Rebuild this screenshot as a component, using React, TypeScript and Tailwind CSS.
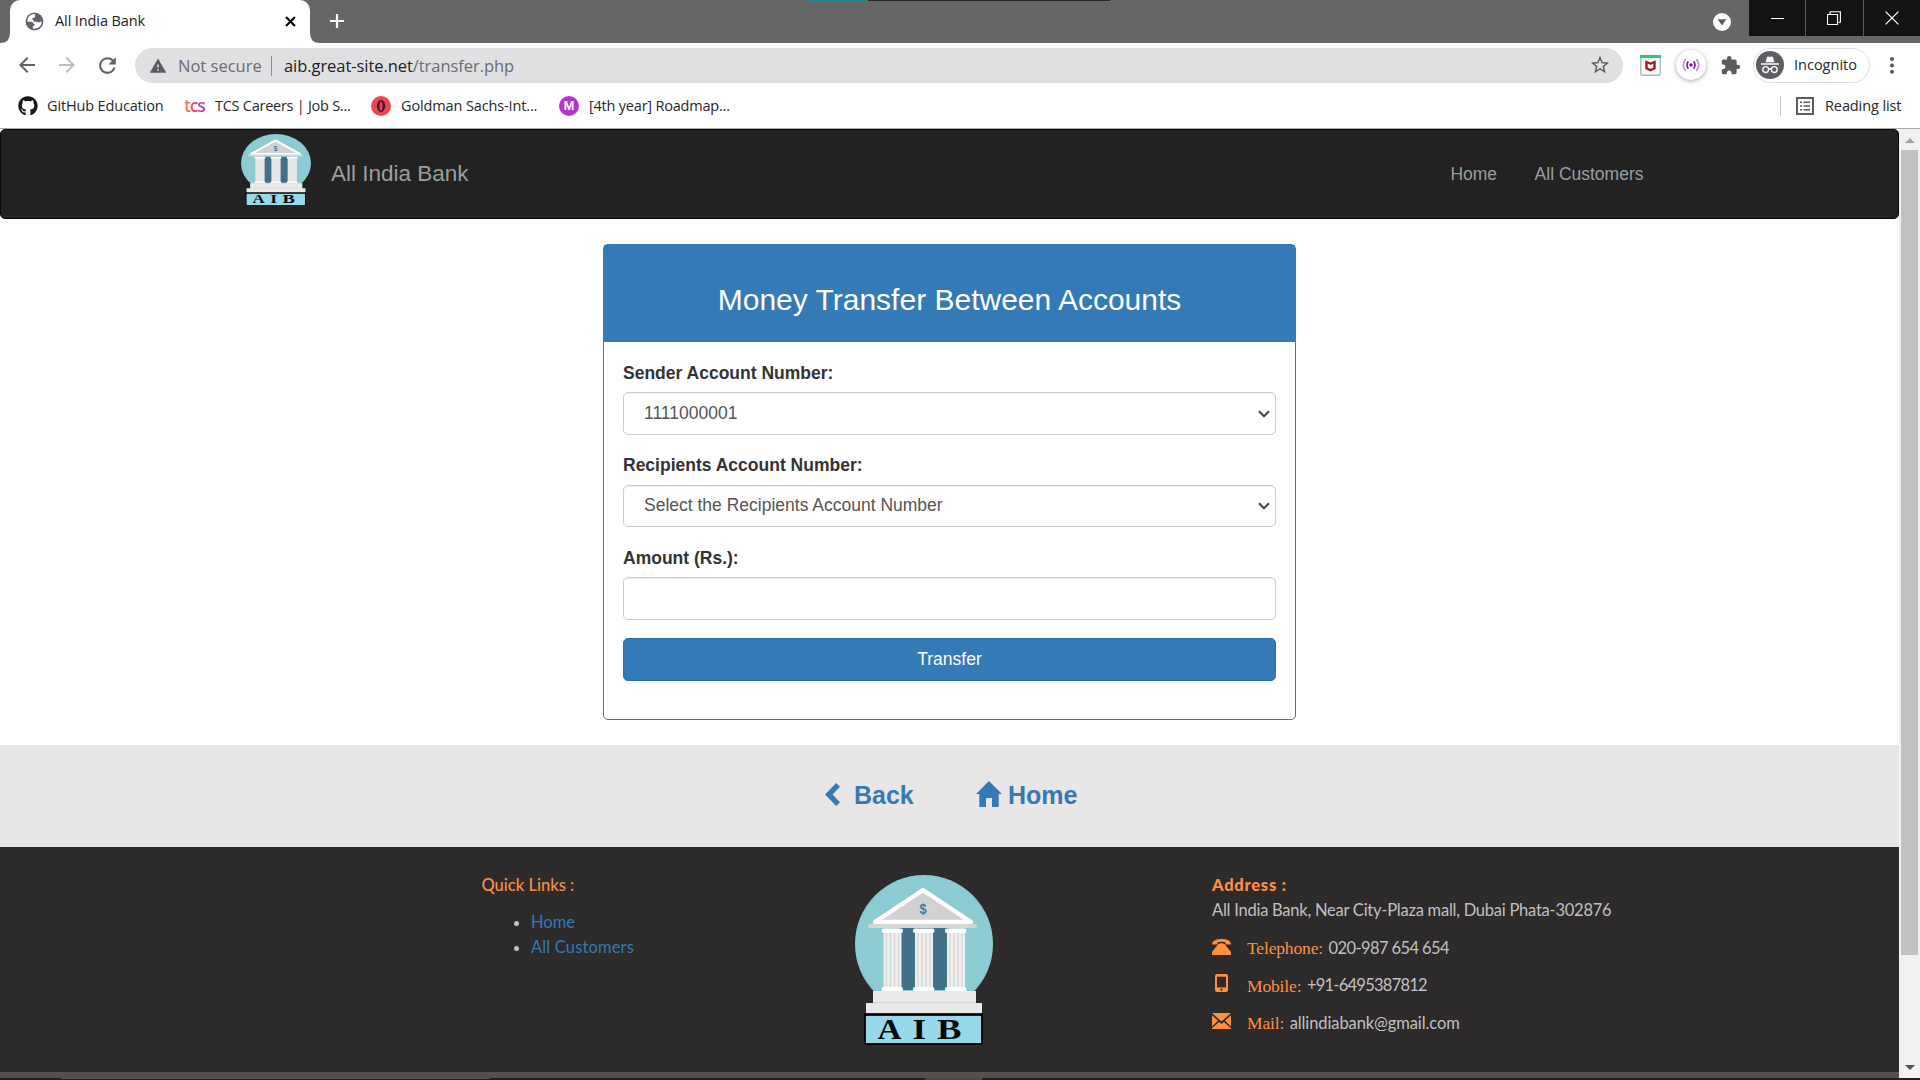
import type { ReactNode } from 'react';
import { FaGithub } from 'react-icons/fa';
import { MdArrowBack, MdArrowForward, MdExtension, MdPublic, MdRefresh, MdStarBorder, MdWarning } from 'react-icons/md';

function BankLogo({ className }: { className: string }) {
  const columns = [26.5, 58, 90];
  return (
    <svg viewBox="0 0 138 170" preserveAspectRatio="none" className={className}>
      <circle cx="69" cy="69" r="69" fill="#8bcbd1" />
      <rect x="44" y="53" width="50" height="62" fill="#41708a" />
      <path d="M68 15 L116 47 H20 Z" fill="#d2d1d3" stroke="#fff" strokeWidth="4.5" strokeLinejoin="round" />
      <rect x="13" y="49" width="109" height="4" rx="2" fill="#d6d6d6" />
      <text x="68" y="39" textAnchor="middle" fontFamily="Liberation Sans" fontWeight="700" fontSize="15" textLength="7" lengthAdjust="spacingAndGlyphs" fill="#2e81ab">$</text>
      {columns.map((x) => (
        <g key={x}>
          <rect x={x + 2} y="56" width="18" height="57" fill="#efeeef" />
          <path d={`M${x + 5} 58V112M${x + 9} 58V112M${x + 13} 58V112M${x + 17} 58V112`} stroke="#d8d7d9" strokeWidth="1.4" />
          <rect x={x} y="53.5" width="21.5" height="4.5" rx="2" fill="#fff" />
          <rect x={x} y="112" width="21.5" height="4.5" rx="2" fill="#fff" />
        </g>
      ))}
      <path d="M18 116H121V128H127V139H11V128H18Z" fill="#ebeaeb" />
      <path d="M18 127.7H121" stroke="#d2d1d3" strokeWidth="1" />
      <rect x="10" y="139.5" width="117" height="29.5" fill="#97d8ea" stroke="#000" strokeWidth="1.8" />
      <path d="M9 139.5H128" stroke="#000" strokeWidth="2.4" />
      <g fontFamily="Liberation Serif" fontWeight="700" fontSize="28.5" fill="#050505" textAnchor="middle">
        <text x="34.6" y="164" textLength="24" lengthAdjust="spacingAndGlyphs">A</text>
        <text x="64.3" y="164" textLength="13.5" lengthAdjust="spacingAndGlyphs">I</text>
        <text x="94.3" y="164" textLength="24.5" lengthAdjust="spacingAndGlyphs">B</text>
      </g>
    </svg>
  );
}

function TabStrip() {
  return (
    <div className="relative flex h-[43px] items-start bg-[#666666]">
      <div className="absolute top-0 left-[808px] flex h-px">
        <div className="w-[60px] bg-[#1f8a92]" />
        <div className="w-[242px] bg-[#262626]" />
      </div>
      <svg className="h-[43px] w-[10px]" viewBox="0 0 10 43"><path d="M0 43Q10 43 10 33V43Z" fill="#fff" /></svg>
      <div className="flex h-[43px] w-[300px] items-center rounded-t-[10px] bg-white pl-[14px]">
        <svg className="-mt-[1px] size-[21px] shrink-0" viewBox="0 0 24 24">
          <circle cx="12" cy="12" r="10.2" fill="#5f6368" />
          <path d="M12.6 3.6Q8 3 5.4 6.6Q3.4 9.2 3.7 12.2H8.2Q9.8 12.2 10.4 13.8L12.2 15.6Q12.2 17.6 10 17.6V20.1Q15.4 21.2 18.6 17Q20.4 14.6 20.2 11.8L17.4 12.8Q16.2 13.4 15.2 12.2H11V10.2Q8.6 9.8 9.6 8.2Q10.4 7.4 12.6 7.4Z" fill="#fff" />
        </svg>
        <span className="-mt-[2px] ml-[10px] w-[229.5px] text-[14.5px] tracking-[-0.1px] text-[#1b1b1b]">All India Bank</span>
        <svg className="size-[11px]" viewBox="0 0 11 11"><path d="M1 1L10 10M10 1L1 10" stroke="#000" strokeWidth="2.1" /></svg>
      </div>
      <svg className="h-[43px] w-[10px]" viewBox="0 0 10 43"><path d="M10 43Q0 43 0 33V43Z" fill="#fff" /></svg>
      <svg className="mt-[13px] ml-[9px] size-[16px]" viewBox="0 0 16 16"><path d="M8 1V15M1 8H15" stroke="#fff" strokeWidth="2.2" /></svg>
      <div className="flex-1" />
      <svg className="mt-[12.5px] mr-[18px] size-[18px]" viewBox="0 0 18 18"><circle cx="9" cy="9" r="9" fill="#fff" /><path d="M4.7 6.3H13.3L9 12.4Z" fill="#5c5c5c" /></svg>
      <div className="flex h-[36px] w-[171px] bg-[#131313] text-white">
        <div className="grid w-[57px] place-items-center border-r border-[#5c5c5c]"><div className="h-px w-[13px] bg-white" /></div>
        <div className="grid w-[58px] place-items-center border-r border-[#5c5c5c] pr-[1px]">
          <svg className="size-[14px]" viewBox="0 0 14 14" fill="none" stroke="#fff"><path d="M.5 3.5H10.5V13.5H.5ZM3 3.5V.8H13.4V11.2H10.5" strokeWidth="1.1" /></svg>
        </div>
        <div className="grid w-[56px] place-items-center pr-[1px]">
          <svg className="size-[14px]" viewBox="0 0 14 14"><path d="M.6 .6L13.4 13.4M13.4 .6L.6 13.4" stroke="#fff" strokeWidth="1.3" /></svg>
        </div>
      </div>
    </div>
  );
}

function Toolbar() {
  return (
    <div className="flex h-[44px] items-center pl-[15px]">
      <MdArrowBack className="size-[24px] text-[#5f6265]" />
      <MdArrowForward className="ml-[16px] size-[24px] text-[#bdbdc0]" />
      <MdRefresh className="ml-[16px] size-[25px] text-[#5f6265]" />
      <div className="ml-[15px] flex h-[35px] w-[1488px] items-center rounded-full bg-[#e0e0e2] pl-[14px] text-[16.5px] text-[#6a6c70]">
        <MdWarning className="mt-px size-[18px] text-[#5a5c60]" />
        <span className="mt-[2px] ml-[11px] w-[83px] whitespace-nowrap">Not secure</span>
        <div className="mt-px ml-[10px] h-[20px] w-px bg-[#8b8d90]" />
        <span className="mt-[2px] ml-[12px] flex-1 tracking-[-0.06px]"><span className="text-[#202124]">aib.great-site.net</span>/transfer.php</span>
        <MdStarBorder className="mr-[12px] size-[22px] text-[#5a5c60]" />
      </div>
      <svg className="ml-[17px] mt-[1px] size-[21px]" viewBox="0 0 21 21">
        <rect x=".8" y=".8" width="19.4" height="19.4" rx="1.5" fill="#fff" stroke="#b4b4b6" strokeWidth="1.4" />
        <rect x="0" y="0" width="21" height="3" fill="#1fcf73" />
        <path d="M5.3 5.2L10.5 7.6L15.7 5.2V14L10.5 16.6L5.3 14ZM7.7 8.6V12.6L10.5 14L13.3 12.6V8.6L10.5 10Z" fill="#a8161f" fillRule="evenodd" />
      </svg>
      <div className="ml-[14.5px] grid size-[30px] place-items-center rounded-full bg-white shadow-[0_1px_4px_rgba(0,0,0,0.35)]">
        <svg className="size-[18px]" viewBox="0 0 18 18" fill="none" strokeLinecap="round">
          <circle cx="9" cy="9" r="1.8" fill="#7a1fa2" />
          <path d="M6 5.8Q3.9 9 6 12.2M12 5.8Q14.1 9 12 12.2" stroke="#7a1fa2" strokeWidth="1.6" />
          <path d="M3.4 3.6Q-.8 9 3.4 14.4M14.6 3.6Q18.8 9 14.6 14.4" stroke="#c58ad8" strokeWidth="1.6" />
        </svg>
      </div>
      <MdExtension className="ml-[14.5px] size-[21px] text-[#5a5c60]" />
      <div className="ml-[12px] flex h-[35px] w-[117px] items-center rounded-full border border-[#dcdcde] pl-[2px]">
        <svg className="size-[28px] shrink-0" viewBox="0 0 28 28">
          <circle cx="14" cy="14" r="14" fill="#5c5e61" />
          <path d="M9.6 11.3L11 6.3Q11.4 5.2 12.5 5.6L14 6.1L15.5 5.6Q16.6 5.2 17 6.3L18.4 11.3ZM5 12.3H23V13.7H5Z" fill="#fff" />
          <g fill="none" stroke="#fff" strokeWidth="1.3"><circle cx="9.7" cy="18.6" r="2.9" /><circle cx="18.3" cy="18.6" r="2.9" /><path d="M12.6 18.3Q14 17.2 15.4 18.3" /></g>
        </svg>
        <span className="ml-[10px] text-[14.5px] text-[#26282b]">Incognito</span>
      </div>
      <svg className="ml-[20px] h-[17px] w-[4px]" viewBox="0 0 4 17" fill="#54575b"><circle cx="2" cy="2" r="2" /><circle cx="2" cy="8.4" r="2" /><circle cx="2" cy="14.8" r="2" /></svg>
    </div>
  );
}

function Bookmark({ icon, children, className }: { icon: ReactNode; children: ReactNode; className: string }) {
  return (
    <div className={`flex items-center whitespace-nowrap ${className}`}>
      {icon}
      <span>{children}</span>
    </div>
  );
}

function Bookmarks() {
  return (
    <div className="flex h-[41px] items-center pb-[3px] pl-[18px] text-[14.5px] text-[#26282b]">
      <Bookmark className="w-[166px] gap-[9px] tracking-[-0.15px]" icon={<FaGithub className="size-[20px] text-[#191717]" />}>GitHub Education</Bookmark>
      <Bookmark
        className="w-[187px] tracking-[-0.26px]"
        icon={<span className="mr-[10px] w-[21px] bg-linear-to-r from-[#ee8a45] via-[#dd3f7d] to-[#9b3fa0] bg-clip-text pb-[2px] text-[17.5px] leading-[20px] font-semibold tracking-[-1.2px] text-transparent">tcs</span>}
      >
        TCS Careers | Job S...
      </Bookmark>
      <Bookmark
        className="w-[188px] gap-[10px] tracking-[-0.13px]"
        icon={
          <svg className="size-[20px]" viewBox="0 0 20 20">
            <circle cx="10" cy="10" r="10" fill="#ee4550" />
            <path d="M10 4A4.2 6 0 1 0 10 16A4.2 6 0 1 0 10 4ZM10 5.4A1.5 4.6 0 1 1 10 14.6A1.5 4.6 0 1 1 10 5.4Z" fill="#3b1840" fillRule="evenodd" />
          </svg>
        }
      >
        Goldman Sachs-Int...
      </Bookmark>
      <Bookmark
        className="gap-[10px] tracking-[-0.21px]"
        icon={<span className="grid size-[20px] place-items-center rounded-full bg-[#b733cf] font-['Roboto'] text-[12px] leading-none font-bold tracking-normal text-white">M</span>}
      >
        [4th year] Roadmap...
      </Bookmark>
      <div className="ml-auto h-[20px] w-px bg-[#c9c9cb]" />
      <svg className="ml-[15px] size-[18px]" viewBox="0 0 18 18" fill="none" stroke="#5a5c60">
        <rect x="1" y="1" width="16" height="16" strokeWidth="2" />
        <path d="M4 5.3H6M4 9H6M4 12.7H6M7.5 5.3H14M7.5 9H14M7.5 12.7H14" strokeWidth="1.6" />
      </svg>
      <span className="ml-[11px] w-[95px] tracking-[-0.1px]">Reading list</span>
    </div>
  );
}

function Navbar() {
  return (
    <nav className="flex h-[90px] items-center rounded-[5px] border border-[#080808] bg-[#222222] pl-[240px] text-[17.5px] text-[#9d9d9d]">
      <BankLogo className="-mt-[9px] h-[72px] w-[70px]" />
      <span className="ml-[20px] text-[22.5px]">All India Bank</span>
      <span className="ml-auto">Home</span>
      <span className="mr-[254.5px] ml-[37.5px]">All Customers</span>
    </nav>
  );
}

function Field({ label, value, select = true }: { label: string; value?: string; select?: boolean }) {
  return (
    <div className="mb-[18.75px]">
      <div className="mb-[6.25px] font-bold text-[#333333]">{label}</div>
      <div className="flex h-[42.5px] items-center justify-between rounded-[5px] border border-[#cccccc] bg-white pr-[5px] pl-[20px] text-[#555555] shadow-[inset_0_1px_1px_rgba(0,0,0,0.075)]">
        <span>{value}</span>
        {select && (
          <svg className="mt-px h-[8px] w-[12px]" viewBox="0 0 12 8"><path d="M1 1.2L6 6.3L11 1.2" fill="none" stroke="#444" strokeWidth="2" /></svg>
        )}
      </div>
    </div>
  );
}

function TransferCard() {
  return (
    <section className="mx-auto mt-[25px] h-[476px] w-[693px] rounded-[5px] border border-[#337ab7] bg-white text-[17.5px] leading-[25px]">
      <h3 className="h-[97px] bg-[#337ab7] pt-[38px] text-center text-[30px] leading-[34px] text-white">Money Transfer Between Accounts</h3>
      <div className="pt-[18.75px] pr-[19px] pl-[19px]">
        <Field label="Sender Account Number:" value="1111000001" />
        <Field label="Recipients Account Number:" value="Select the Recipients Account Number" />
        <Field label="Amount (Rs.):" select={false} />
        <div className="flex h-[42.5px] items-center justify-center rounded-[5px] border border-[#2e6da4] bg-[#337ab7] text-white">Transfer</div>
      </div>
    </section>
  );
}

function BackBar() {
  return (
    <div className="mt-[25px] flex h-[102px] items-center bg-[#e8e6e7] pl-[825px] text-[25px] font-bold text-[#337ab7]">
      <svg className="-mt-[3px] h-[23px] w-[15px]" viewBox="0 0 15 23"><path d="M11.2 0L15 3.8L7.6 11.5L15 19.2L11.2 23L0 11.5Z" fill="currentColor" /></svg>
      <span className="-mt-[1px] ml-[14px] w-[122px]">Back</span>
      <svg className="-mt-[5px] h-[26px] w-[26px]" viewBox="0 0 26 26"><path d="M13 0L26 13H22.7V26H16V17H10V26H3.3V13H0Z" fill="currentColor" /></svg>
      <span className="-mt-[1px] ml-[6px]">Home</span>
    </div>
  );
}

function Contact({ icon, label, children, className }: { icon: ReactNode; label: string; children: ReactNode; className: string }) {
  return (
    <div className="mt-[12.5px] flex h-[25px] items-center text-[#ff9040]">
      <span className="flex w-[35px] justify-start">{icon}</span>
      <span className="pt-[2px] font-['Liberation_Serif'] text-[17.5px] tracking-[-0.15px]">{label}</span>
      <span className={`ml-[5.5px] pt-px text-[#c2c0c1] ${className}`}>{children}</span>
    </div>
  );
}

function Footer() {
  return (
    <footer className="flex h-[225px] bg-[#2c2a2b] pt-[25px] pl-[481.5px] font-['Lato',sans-serif] text-[16.5px] leading-[25px] whitespace-nowrap text-[#c2c0c1]">
      <div className="w-[373.5px] pt-[0.6px]">
        <div className="font-medium text-[#ff9040]">Quick Links :</div>
        <ul className="mt-[12.5px] list-disc pl-[49.5px] marker:text-[#c2c0c1]">
          <li><span className="text-[#337ab7]">Home</span></li>
          <li><span className="tracking-[0.15px] text-[#337ab7]">All Customers</span></li>
        </ul>
      </div>
      <BankLogo className="mt-[3px] h-[170px] w-[138px]" />
      <div className="ml-[219px]">
        <div className="pt-[0.6px] font-black tracking-[0.75px] text-[#ff9040]">Address :</div>
        <div className="tracking-[-0.24px]">All India Bank, Near City-Plaza mall, Dubai Phata-302876</div>
        <Contact
          label="Telephone:"
          className="tracking-[-0.6px]"
          icon={
            <svg className="-mt-[2px] h-[16px] w-[19px]" viewBox="0 0 19 16" fill="currentColor">
              <path d="M0 5.5Q0 0 9.5 0T19 5.5H13.6V3.4Q9.5 2.3 5.4 3.4V5.5ZM6.4 5H7.6V4.2H11.4V5H12.6L19 13V16H0V13Z" />
            </svg>
          }
        >
          020-987 654 654
        </Contact>
        <Contact
          label="Mobile:"
          className="tracking-[-0.75px]"
          icon={
            <svg className="-mt-[4px] ml-[3px] h-[18px] w-[13px]" viewBox="0 0 13 18" fill="currentColor">
              <path fillRule="evenodd" d="M2 0H11Q13 0 13 2V16Q13 18 11 18H2Q0 18 0 16V2Q0 0 2 0ZM2 2.8V13.4H11V2.8ZM6.5 14.6A1.1 1.1 0 1 0 6.5 16.8A1.1 1.1 0 1 0 6.5 14.6Z" />
            </svg>
          }
        >
          +91-6495387812
        </Contact>
        <Contact
          label="Mail:"
          className="tracking-[-0.1px]"
          icon={
            <svg className="-mt-[4px] h-[16px] w-[19px]" viewBox="0 0 19 16" fill="currentColor">
              <path d="M0 0H19L9.5 8.6ZM0 2.2L6 7.8L0 13.4ZM19 2.2V13.4L13 7.8ZM0 16V15.2L7.1 8.9L9.5 11L11.9 8.9L19 15.2V16Z" />
            </svg>
          }
        >
          allindiabank@gmail.com
        </Contact>
      </div>
    </footer>
  );
}

function Scrollbar() {
  return (
    <div className="flex w-[21px] flex-col items-center bg-[#f1f1f1]">
      <svg className="mt-[9px] h-[5px] w-[10px]" viewBox="0 0 10 5"><path d="M0 5L5 0L10 5Z" fill="#a3a3a3" /></svg>
      <div className="mt-[7px] h-[805px] w-[17px] bg-[#c1c1c1]" />
      <svg className="mt-auto mb-[8px] h-[5px] w-[10px]" viewBox="0 0 10 5"><path d="M0 0L5 5L10 0Z" fill="#505050" /></svg>
    </div>
  );
}

export default function App() {
  return (
    <div className="flex h-[1080px] w-[1920px] flex-col overflow-hidden bg-white font-['Open_Sans',sans-serif]">
      <TabStrip />
      <Toolbar />
      <Bookmarks />
      <div className="h-px bg-[#a9abab]" />
      <div className="flex h-[949px]">
        <div className="w-[1899px] font-['Liberation_Sans',sans-serif]">
          <Navbar />
          <TransferCard />
          <BackBar />
          <Footer />
          <div className="h-[6px] bg-[#55514f]" />
        </div>
        <Scrollbar />
      </div>
      <div className="flex h-[2px] bg-[#231f20]">
        <div className="ml-[61px] h-px w-[429px] bg-[#55514f]" />
        <div className="ml-[435px] w-[57px] bg-[#4c4846]" />
      </div>
    </div>
  );
}
